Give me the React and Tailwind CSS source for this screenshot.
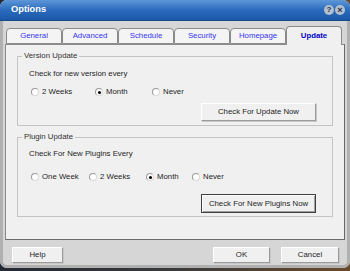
const tabs = ['General', 'Advanced', 'Schedule', 'Security', 'Homepage', 'Update'];

function Radio({ label, checked, width }) {
  return (
    <div className="flex items-center" style={{ width }}>
      <span className="flex h-[8px] w-[8px] items-center justify-center rounded-full border border-t-[#9a9a9a] border-l-[#9a9a9a] border-r-[#d8d8d8] border-b-[#d8d8d8] bg-white">
        {checked && <span className="h-[3px] w-[3px] rounded-full bg-black" />}
      </span>
      <span className="ml-[3px]">{label}</span>
    </div>
  );
}

function Btn({ children, className = '', focused }) {
  return (
    <div
      className={
        'flex items-center justify-center border bg-[#f0f0f0] leading-[10px] ' +
        (focused
          ? 'border-[#404040] shadow-[inset_1px_1px_0_#ffffff,inset_-1px_-1px_0_#a0a0a0] '
          : 'border-t-white border-l-white border-r-[#9a9a9a] border-b-[#9a9a9a] shadow-[1px_1px_0_#c8c8c8] ') +
        className
      }
    >
      {children}
    </div>
  );
}

function Group({ title, children, className = '' }) {
  return (
    <fieldset className={'border border-[#c4c4c4] ' + className}>
      <legend className="ml-[4px] px-[2px] leading-[10px] text-[#303030]">{title}</legend>
      {children}
    </fieldset>
  );
}

export default function App() {
  return (
    <div
      className="h-[271px] w-[350px] overflow-hidden bg-gradient-to-r from-[#232a36] via-[#3a3a3a] to-[#6a4a2c] text-[7.8px] text-[#1e1e1e]"
      style={{ fontFamily: '"Liberation Sans", Arial, sans-serif' }}
    >
      <div className="flex h-[268px] w-[350px] flex-col overflow-hidden rounded-t-[7px] rounded-b-[7px] bg-[#d6d6d6]">
        <div className="flex h-[21px] shrink-0 items-center border-b border-[#174a8c] bg-gradient-to-b from-[#5e97d8] via-[#2a6bbd] to-[#1b58a8] pl-[11px] pr-[5px]">
          <span className="text-[9.3px] font-bold text-white">Options</span>
          <div className="ml-auto flex gap-[1px]">
            <span className="flex h-[10px] w-[10px] items-center justify-center rounded-full bg-[#b4c0cf] text-[8px] font-bold leading-none text-[#1d2c48]">?</span>
            <span className="flex h-[10px] w-[10px] items-center justify-center rounded-full bg-[#b4c0cf] text-[9px] font-bold leading-none text-[#1d2c48]">×</span>
          </div>
        </div>

        <div className="flex flex-1 flex-col border-x-[3px] border-b-[3px] border-[#b0b0b0] rounded-b-[7px]">
          <div className="mt-[6px] flex h-[17px] items-end pl-[3px]">
            {tabs.map((t) => {
              const sel = t === 'Update';
              return (
                <div
                  key={t}
                  className={
                    'flex w-[56px] items-center justify-center rounded-t-[4px] border border-[#8a8a8a] ' +
                    (sel
                      ? 'relative z-10 -mb-px h-[19px] border-b-0 bg-[#f0f0f0] font-bold text-[#0000c8]'
                      : 'h-[16px] bg-[#f4f4f4] text-[#3434f0]')
                  }
                >
                  {t}
                </div>
              );
            })}
          </div>

          <div className="mx-[2px] flex h-[196px] flex-col border border-t-[#8a8a8a] border-l-[#8a8a8a] border-r-[#6a6a6a] border-b-[#6a6a6a] bg-[#f0f0f0] px-[11px] pt-[6px]">
            <Group title="Version Update" className="pb-[4px]">
              <div className="mt-[8px] pl-[11px] leading-[10px]">Check for new version every</div>
              <div className="mt-[8px] flex h-[10px] pl-[13px]">
                <Radio label="2 Weeks" width={64} />
                <Radio label="Month" checked width={57} />
                <Radio label="Never" width={50} />
              </div>
              <div className="mt-[6px] flex justify-end pr-[16px]">
                <Btn className="h-[18px] w-[115px]">Check For Update Now</Btn>
              </div>
            </Group>

            <Group title="Plugin Update" className="mt-[6px] pb-[3px]">
              <div className="mt-[7px] pl-[11px] leading-[10px]">Check For New Plugins Every</div>
              <div className="mt-[13px] flex h-[10px] pl-[13px]">
                <Radio label="One Week" width={58} />
                <Radio label="2 Weeks" width={57} />
                <Radio label="Month" checked width={46} />
                <Radio label="Never" width={50} />
              </div>
              <div className="mt-[12px] flex justify-end pr-[16px]">
                <Btn focused className="h-[19px] w-[115px]">Check For New Plugins Now</Btn>
              </div>
            </Group>
          </div>

          <div className="mt-[7px] flex pl-[9px]">
            <Btn className="h-[16px] w-[51px]">Help</Btn>
            <Btn className="ml-auto h-[16px] w-[57px]">OK</Btn>
            <Btn className="ml-[11px] mr-[8px] h-[16px] w-[58px]">Cancel</Btn>
          </div>
        </div>
      </div>
    </div>
  );
}
